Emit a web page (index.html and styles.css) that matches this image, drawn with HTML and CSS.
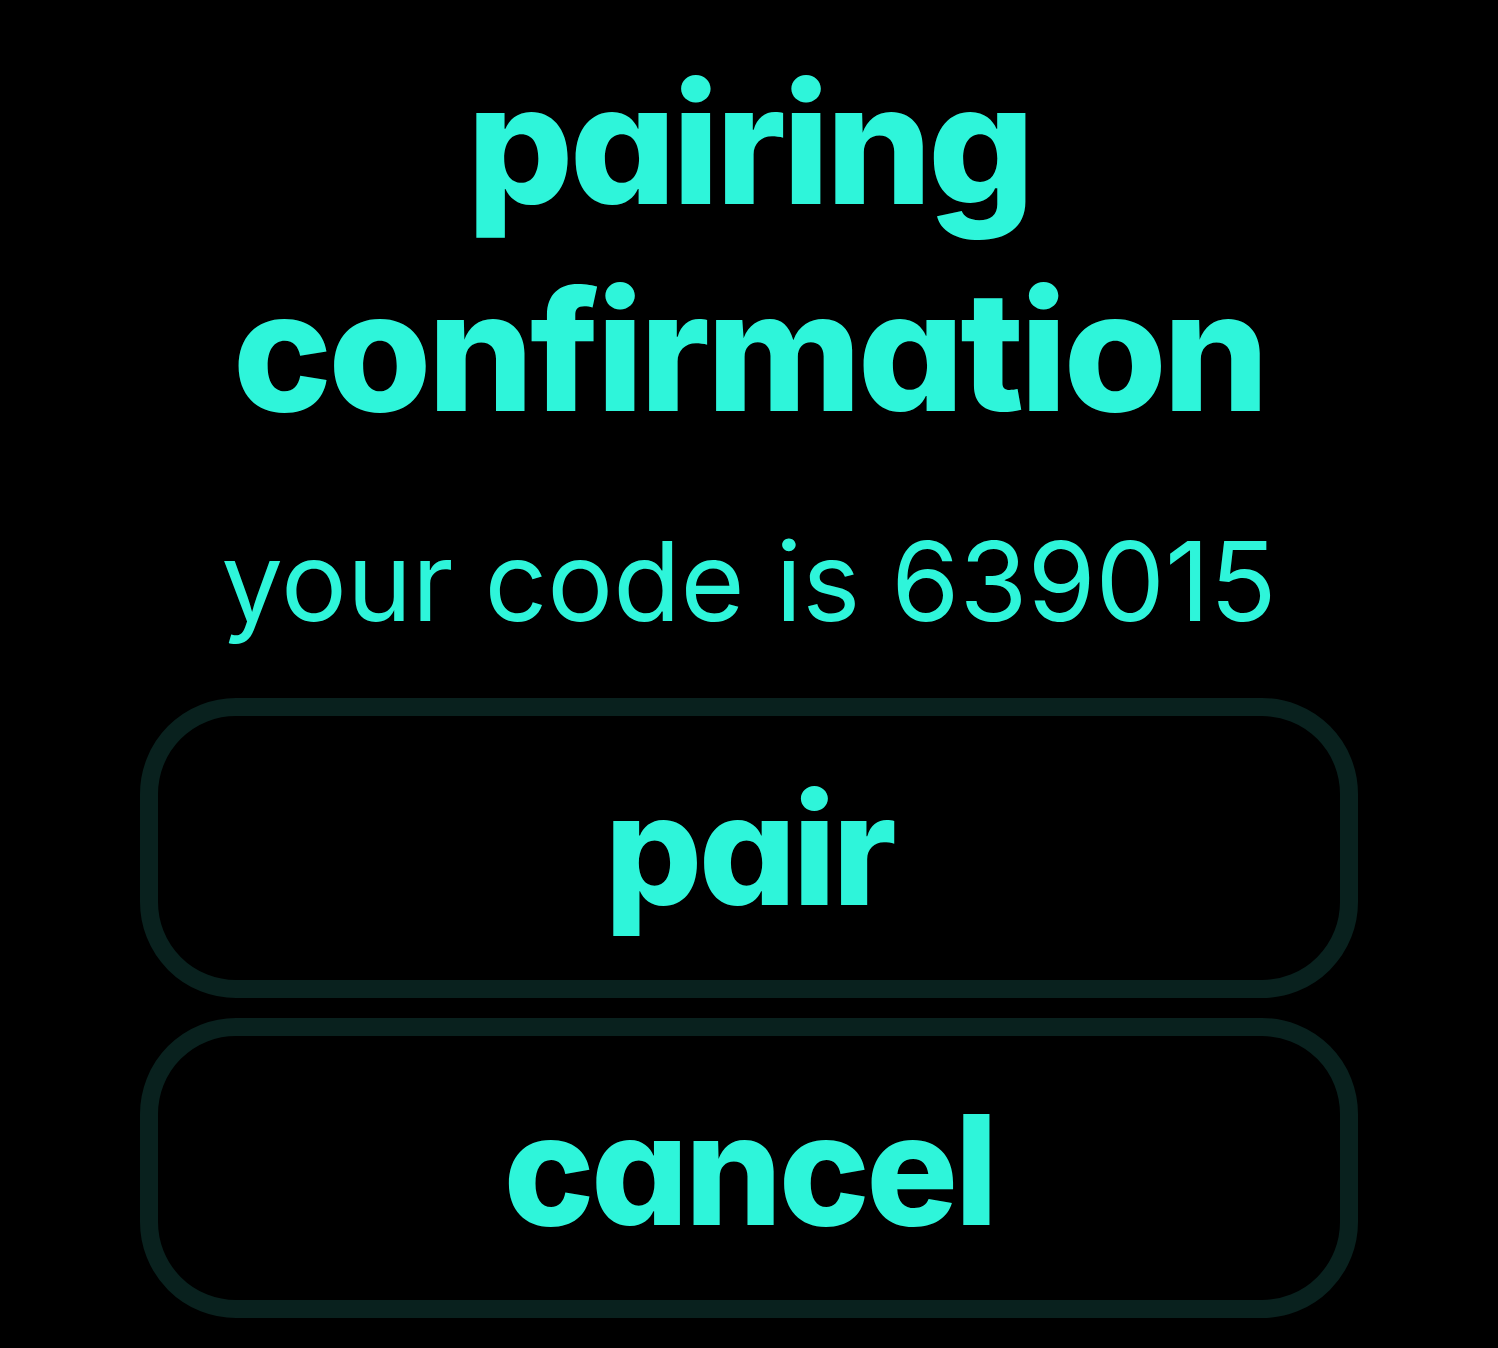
FILE: index.html
```html
<!DOCTYPE html>
<html lang="en">
<head>
<meta charset="utf-8">
<title>pairing confirmation</title>
<link rel="stylesheet" href="styles.css">
</head>
<body>
<main class="screen">
  <h1 class="title">pairing<br>confirmation</h1>
  <p class="code">your code is 639015</p>
  <div class="actions">
    <button class="btn">pair</button>
    <button class="btn">cancel</button>
  </div>
</main>
</body>
</html>
```

FILE: styles.css
```css
html, body {
  margin: 0;
  padding: 0;
  background: #000;
}
.screen {
  width: 1498px;
  height: 1348px;
  display: flex;
  flex-direction: column;
  align-items: center;
  color: #2ef5da;
  font-family: Inter, "Noto Sans", sans-serif;
  font-feature-settings: "cv11" 1;
  overflow: hidden;
}
.title {
  margin: 40px 0 0;
  font-size: 167px;
  font-weight: 800;
  line-height: 207px;
  letter-spacing: -3.9px;
  text-align: center;
}
.code {
  margin: 0;
  margin-top: 62px;
  font-size: 110px;
  font-weight: 400;
  line-height: 130px;
  text-align: center;
}
.actions {
  align-self: stretch;
  padding: 0 140px;
  margin-top: 52px;
  display: flex;
  flex-direction: column;
  gap: 20px;
}
.btn {
  height: 300px;
  box-sizing: border-box;
  border: 18px solid #09211e;
  border-radius: 96px;
  background: #000;
  color: inherit;
  font-family: inherit;
  font-feature-settings: inherit;
  font-size: 153px;
  font-weight: 800;
  letter-spacing: -3.5px;
  line-height: 1;
  padding: 2px 0 0;
}
```
